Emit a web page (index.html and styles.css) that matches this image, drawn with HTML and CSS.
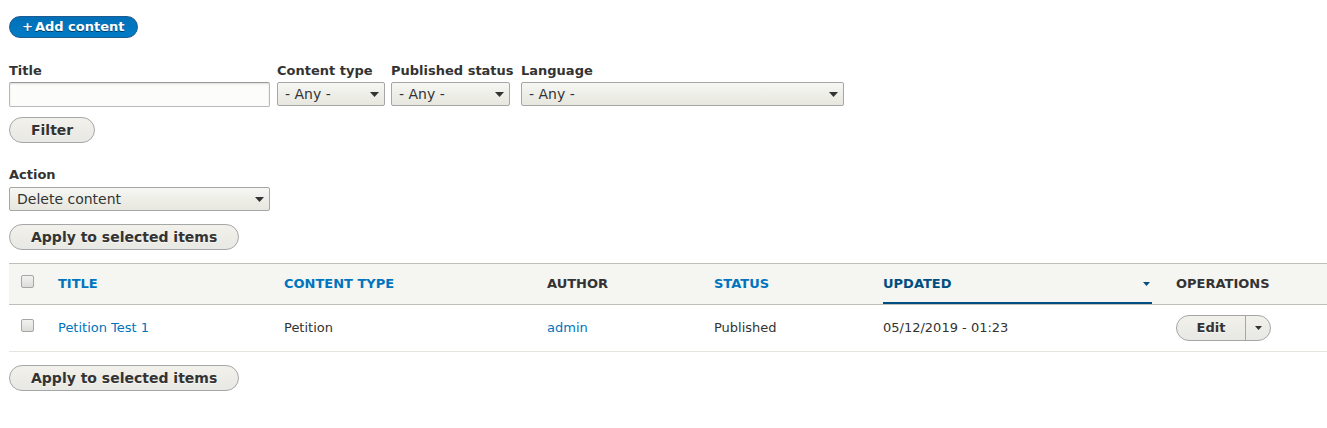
FILE: index.html
```html
<!DOCTYPE html>
<html lang="en">
<head>
<meta charset="utf-8">
<title>Content</title>
<link rel="stylesheet" href="styles.css">
</head>
<body>
<div class="page">
  <div class="action-links">
    <a class="button button--primary button--small" href="#"><span class="plus">+</span>Add content</a>
  </div>

  <form class="filters-form">
    <div class="filters">
      <div class="form-item item-title">
        <label for="f-title">Title</label>
        <input id="f-title" class="text-input w-title" type="text">
      </div>
      <div class="form-item">
        <label for="f-type">Content type</label>
        <span class="select-wrap w-type">
          <select id="f-type" class="select"><option>- Any -</option></select>
          <svg class="select-arrow" width="9" height="5" viewBox="0 0 9 5"><polygon points="0,0 9,0 4.5,5" fill="#333"/></svg>
        </span>
      </div>
      <div class="form-item item-status">
        <label for="f-status">Published status</label>
        <span class="select-wrap w-status">
          <select id="f-status" class="select"><option>- Any -</option></select>
          <svg class="select-arrow" width="9" height="5" viewBox="0 0 9 5"><polygon points="0,0 9,0 4.5,5" fill="#333"/></svg>
        </span>
      </div>
      <div class="form-item">
        <label for="f-lang">Language</label>
        <span class="select-wrap w-lang">
          <select id="f-lang" class="select"><option>- Any -</option></select>
          <svg class="select-arrow" width="9" height="5" viewBox="0 0 9 5"><polygon points="0,0 9,0 4.5,5" fill="#333"/></svg>
        </span>
      </div>
    </div>
    <div class="filter-actions">
      <button class="button" type="button">Filter</button>
    </div>
  </form>

  <form class="bulk-form">
    <div class="form-item action-item">
      <label for="f-action">Action</label>
      <span class="select-wrap w-title">
        <select id="f-action" class="select"><option>Delete content</option></select>
        <svg class="select-arrow" width="9" height="5" viewBox="0 0 9 5"><polygon points="0,0 9,0 4.5,5" fill="#333"/></svg>
      </span>
    </div>
    <div class="bulk-actions">
      <button class="button" type="button">Apply to selected items</button>
    </div>

    <table class="content-table">
      <thead>
        <tr>
          <th class="col-check"><input class="checkbox head-check" type="checkbox"></th>
          <th class="col-title"><a href="#">Title</a></th>
          <th class="col-type"><a href="#">Content type</a></th>
          <th class="col-author">Author</th>
          <th class="col-status"><a href="#">Status</a></th>
          <th class="col-updated is-active"><a href="#"><span>Updated</span><svg class="sort-icon" width="7" height="4" viewBox="0 0 7 4"><polygon points="0,0 7,0 3.5,4" fill="#004f80"/></svg></a></th>
          <th class="col-ops">Operations</th>
        </tr>
      </thead>
      <tbody>
        <tr>
          <td class="col-check"><input class="checkbox row-check" type="checkbox"></td>
          <td><a href="#">Petition Test 1</a></td>
          <td>Petition</td>
          <td><a href="#">admin</a></td>
          <td>Published</td>
          <td>05/12/2019 - 01:23</td>
          <td>
            <div class="dropbutton">
              <a class="dropbutton-main" href="#">Edit</a>
              <span class="dropbutton-toggle"><svg width="7" height="4" viewBox="0 0 7 4"><polygon points="0,0 7,0 3.5,4" fill="#333"/></svg></span>
            </div>
          </td>
        </tr>
      </tbody>
    </table>

    <div class="bulk-actions bottom">
      <button class="button" type="button">Apply to selected items</button>
    </div>
  </form>
</div>
</body>
</html>
```

FILE: styles.css
```css
html, body {
  margin: 0;
  padding: 0;
  background: #fff;
}
body {
  font-family: "DejaVu Sans", "Liberation Sans", sans-serif;
  font-size: 13px;
  color: #333;
}
a {
  color: #0074bd;
  text-decoration: none;
}
.page {
  padding: 16px 0 0 9px;
}

/* Buttons */
.button {
  display: inline-block;
  box-sizing: border-box;
  font-family: "DejaVu Sans", "Liberation Sans", sans-serif;
  font-size: 14px;
  font-weight: bold;
  line-height: 16px;
  padding: 4px 21px;
  color: #333;
  border: 1px solid #a6a6a6;
  border-radius: 20em;
  background: linear-gradient(to top, #e8e8e4, #f2f1eb);
  text-shadow: 0 1px rgba(255,255,255,0.6);
  cursor: pointer;
  margin: 0;
}
.button--primary {
  color: #fff;
  background: linear-gradient(to top, #007bc6, #0071b8);
  border-color: #1e5c90;
  text-shadow: 0 1px rgba(0,0,0,0.5);
}
.button--small {
  font-size: 13px;
  padding: 2px 12px;
}
.plus {
  padding-right: 2px;
}
.action-links {
  display: flex;
  margin-bottom: 25px;
}

/* Form items */
.form-item label {
  display: block;
  font-weight: bold;
  font-size: 13px;
  line-height: 15px;
  margin-bottom: 4px;
  white-space: nowrap;
}
.filters {
  display: flex;
  align-items: flex-start;
  gap: 6px;
}
.item-title { margin-right: 1px; }
.item-status { width: 124px; }
.text-input {
  display: block;
  box-sizing: border-box;
  height: 25px;
  border: 1px solid #b8b8b8;
  border-top-color: #999;
  border-radius: 2px;
  background: #fcfcfa;
  box-shadow: inset 0 1px 2px rgba(0,0,0,0.125);
  font-family: inherit;
  font-size: 14px;
  padding: 2px 6px;
  margin: 0;
}
.w-title { width: 261px; }
.w-type { width: 108px; }
.w-status { width: 119px; }
.w-lang { width: 323px; }

.select-wrap {
  position: relative;
  display: block;
}
.select {
  -webkit-appearance: none;
  appearance: none;
  display: block;
  box-sizing: border-box;
  width: 100%;
  height: 24px;
  margin: 0;
  padding: 0 20px 0 7px;
  font-family: "DejaVu Sans", "Liberation Sans", sans-serif;
  font-size: 14px;
  line-height: 22px;
  color: #333;
  border: 1px solid #a6a6a6;
  border-radius: 2px;
  background: linear-gradient(to bottom, #f6f6f3, #e7e7df);
}
.select-arrow {
  position: absolute;
  right: 6px;
  top: 10px;
  pointer-events: none;
}
.filter-actions {
  margin-top: 10px;
  display: flex;
}
.bulk-form {
  margin-top: 24px;
}
.action-item label {
  margin-bottom: 5px;
}
.bulk-actions {
  display: flex;
  margin-top: 13px;
}
.bulk-actions.bottom {
  margin-top: 13px;
}

/* Checkbox */
.checkbox {
  -webkit-appearance: none;
  appearance: none;
  display: block;
  box-sizing: border-box;
  width: 13px;
  height: 13px;
  margin: 0;
  border: 1px solid #a6a6a6;
  border-radius: 2px;
  background: linear-gradient(to bottom, #f2f2f0, #dcdcd8);
}
.head-check { margin-top: 1px; }
.row-check { margin-top: 4px; }

/* Table */
.content-table {
  width: 100%;
  margin-top: 13px;
  border-collapse: collapse;
  table-layout: fixed;
  font-size: 13px;
}
.content-table thead tr {
  background: #f5f5f2;
  border-top: 1px solid #bfbfba;
  border-bottom: 1px solid #bfbfba;
}
.content-table th {
  text-align: left;
  font-weight: bold;
  text-transform: uppercase;
  padding: 10px 12px;
  line-height: 20px;
  color: #333;
  vertical-align: middle;
  white-space: nowrap;
}
.content-table th a {
  display: block;
}
.content-table th.is-active a {
  display: flex;
  justify-content: space-between;
  align-items: center;
  color: #004f80;
  border-bottom: 2px solid #004f80;
  padding-bottom: 8px;
  margin-bottom: -10px;
}
.sort-icon {
  margin-right: 2px;
}
.content-table th.col-check,
.content-table td.col-check {
  vertical-align: top;
}
.content-table tbody tr {
  border-bottom: 1px solid #e6e4df;
}
.content-table td {
  padding: 10px 12px;
  line-height: 20px;
  vertical-align: middle;
  white-space: nowrap;
}
.col-check { width: 13px; }
.col-title { width: 202px; }
.col-type { width: 239px; }
.col-author { width: 143px; }
.col-status { width: 145px; }
.col-updated { width: 269px; }

/* Dropbutton */
.dropbutton {
  display: inline-flex;
  box-sizing: border-box;
  height: 26px;
  border: 1px solid #a6a6a6;
  border-radius: 20em;
  background: linear-gradient(to top, #e8e8e4, #f2f1eb);
  overflow: hidden;
}
.dropbutton-main {
  display: block;
  width: 68px;
  text-align: center;
  font-weight: bold;
  font-size: 13px;
  line-height: 24px;
  color: #333;
  text-shadow: 0 1px rgba(255,255,255,0.6);
}
.dropbutton-toggle {
  display: flex;
  align-items: center;
  justify-content: center;
  width: 24px;
  border-left: 1px solid #a6a6a6;
}
```
